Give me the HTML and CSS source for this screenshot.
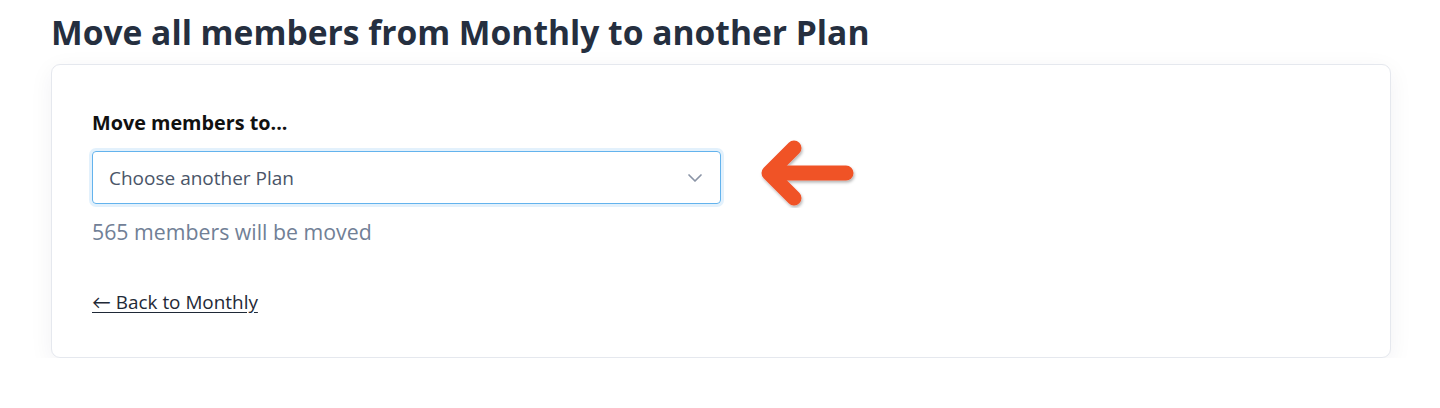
FILE: index.html
```html
<!DOCTYPE html>
<html>
<head>
<meta charset="utf-8">
<link rel="stylesheet" href="styles.css">
</head>
<body>
<main class="page">
  <h1 class="title">Move all members from Monthly to another Plan</h1>
  <section class="card">
    <label class="label">Move members to...</label>
    <div class="row">
      <div class="select">
        <span class="select-text">Choose another Plan</span>
        <svg class="chev" width="16" height="10" viewBox="0 0 16 10"><path d="M2 2 L8 8 L14 2" fill="none" stroke="#8a94a6" stroke-width="1.7" stroke-linecap="round" stroke-linejoin="round"/></svg>
      </div>
      <svg class="arrow" width="110" height="90" viewBox="0 0 110 90">
        <defs>
          <filter id="sh" x="-20%" y="-20%" width="140%" height="140%">
            <feDropShadow dx="1" dy="2" stdDeviation="1.5" flood-color="#000" flood-opacity="0.3"/>
          </filter>
        </defs>
        <g filter="url(#sh)" fill="none" stroke="#f05228" stroke-width="15" stroke-linecap="round" stroke-linejoin="round">
          <path d="M43 19 L18 44 L43 69"/>
          <path d="M20 44 L95 44"/>
        </g>
      </svg>
    </div>
    <p class="count">565 members will be moved</p>
    <a class="back" href="#">← Back to Monthly</a>
  </section>
</main>
</body>
</html>
```
FILE: styles.css
```css
* { box-sizing: border-box; }
html, body { margin: 0; padding: 0; background: #ffffff; }
body { font-family: "Open Sans", Lato, sans-serif; }
.page { padding: 12px 50px 0 51px; width: 1440px; }
.title {
  margin: 0 0 12px 0;
  font-size: 33.6px;
  font-weight: 700;
  color: #252f3f;
  line-height: 40px;
}
.card {
  width: 1340px;
  height: 294px;
  background: #fff;
  border: 1px solid #e5e8ee;
  border-radius: 9px;
  box-shadow: 0 6px 24px rgba(30, 40, 70, 0.06);
  padding: 46px 40px 0 40px;
}
.label {
  display: block;
  font-size: 19.8px;
  font-weight: 700;
  color: #111;
  line-height: 24px;
  margin-bottom: 16px;
}
.row { display: flex; align-items: center; height: 53px; }
.select {
  width: 629px;
  height: 53px;
  flex: none;
  border: 1px solid #63b3ed;
  border-radius: 4px;
  box-shadow: 0 0 0 3px rgba(99, 179, 237, 0.18);
  display: flex;
  align-items: center;
  justify-content: space-between;
  padding: 0 17px 0 16px;
}
.select-text { font-size: 19px; color: #4a5568; }
.chev { margin-top: 1px; }
.arrow { flex: none; margin-left: 30px; margin-top: -8px; }
.count {
  margin: 14px 0 0 0;
  font-size: 21.3px;
  color: #718096;
  line-height: 28px;
}
.back {
  display: inline-block;
  margin-top: 44px;
  font-size: 18.9px;
  color: #1f2937;
  text-decoration: underline;
  text-underline-offset: 3px;
  line-height: 24px;
}
```
